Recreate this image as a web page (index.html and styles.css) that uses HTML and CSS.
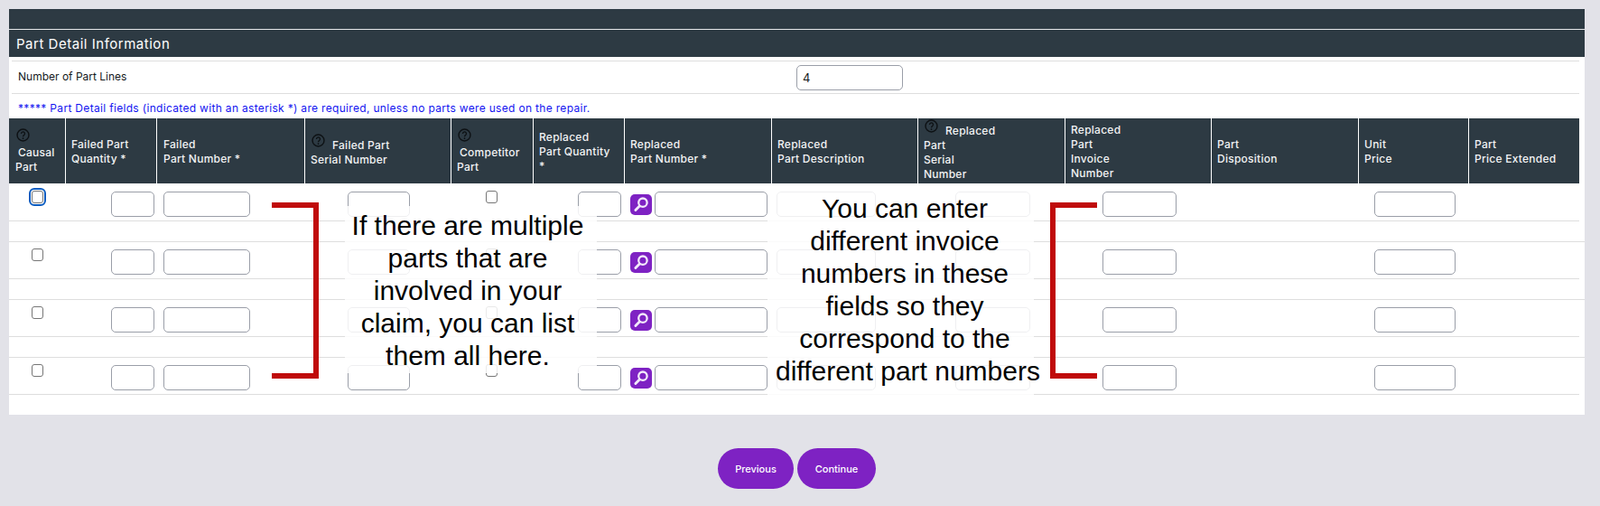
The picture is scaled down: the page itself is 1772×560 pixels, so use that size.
FILE: index.html
```html
<!DOCTYPE html>
<html lang="en">
<head>
<meta charset="utf-8">
<title>Part Detail Information</title>
<link rel="stylesheet" href="styles.css">
</head>
<body>
<svg class="defs" width="0" height="0" aria-hidden="true">
  <symbol id="help" viewBox="0 0 16 16">
    <circle cx="8" cy="8" r="6.9" fill="none" stroke="#0d1114" stroke-width="1.5"/>
    <path d="M5.9 6.3a2.1 2.1 0 1 1 3.3 1.7c-.8.6-1.2 1-1.2 1.9" fill="none" stroke="#0d1114" stroke-width="1.4"/>
    <circle cx="8" cy="11.9" r=".9" fill="#0d1114"/>
  </symbol>
  <symbol id="lens" viewBox="0 0 24 24">
    <circle cx="14" cy="9.6" r="4.9" fill="none" stroke="#f3e9fb" stroke-width="2.4"/>
    <path d="M10.2 13.6 5.6 18.2" fill="none" stroke="#f3e9fb" stroke-width="3" stroke-linecap="round"/>
  </symbol>
</svg>

<main class="page">
  <section class="panel">
    <div class="bar-top"></div>
    <h2 class="bar-title">Part Detail Information</h2>

    <div class="lines-row">
      <span class="lines-label">Number of Part Lines</span>
      <input class="field lines-input" type="text" value="4">
    </div>

    <p class="note">***** Part Detail fields (indicated with an asterisk *) are required, unless no parts were used on the repair.</p>

    <div class="grid head">
      <div class="th"><svg class="help"><use href="#help"/></svg><span class="indent">Causal</span><br>Part</div>
      <div class="th">Failed Part<br>Quantity *</div>
      <div class="th th-wide">Failed<br>Part Number *</div>
      <div class="th th-help"><svg class="help inline"><use href="#help"/></svg><span class="gap">Failed Part</span><br>Serial Number</div>
      <div class="th"><svg class="help"><use href="#help"/></svg><span class="indent">Competitor</span><br>Part</div>
      <div class="th">Replaced<br>Part Quantity<br>*</div>
      <div class="th">Replaced<br>Part Number *</div>
      <div class="th">Replaced<br>Part Description</div>
      <div class="th th-help"><svg class="help inline"><use href="#help"/></svg><span class="gap">Replaced</span><br>Part<br>Serial<br>Number</div>
      <div class="th">Replaced<br>Part<br>Invoice<br>Number</div>
      <div class="th">Part<br>Disposition</div>
      <div class="th">Unit<br>Price</div>
      <div class="th">Part<br>Price Extended</div>
    </div>

    <div class="grid part-row">
      <div class="c-causal"><input class="check is-focused" type="checkbox"></div>
      <div class="c-fqty"><input class="field w48" type="text"></div>
      <div class="c-fnum"><input class="field w96" type="text"></div>
      <div class="c-fser"><input class="field w69" type="text"></div>
      <div class="c-comp"><input class="check" type="checkbox"></div>
      <div class="c-rqty"><input class="field w48" type="text"></div>
      <div class="c-rnum"><span class="lookup"><svg class="lens"><use href="#lens"/></svg></span><input class="field w125" type="text"></div>
      <div class="c-rdesc"><input class="field w110" type="text"></div>
      <div class="c-rser"><input class="field w83" type="text"></div>
      <div class="c-rinv"><input class="field w82" type="text"></div>
      <div></div>
      <div class="c-unit"><input class="field w90" type="text"></div>
      <div></div>
    </div>
    <div class="spacer"></div>

    <div class="grid part-row">
      <div class="c-causal"><input class="check" type="checkbox"></div>
      <div class="c-fqty"><input class="field w48" type="text"></div>
      <div class="c-fnum"><input class="field w96" type="text"></div>
      <div class="c-fser"><input class="field w69" type="text"></div>
      <div class="c-comp"><input class="check" type="checkbox"></div>
      <div class="c-rqty"><input class="field w48" type="text"></div>
      <div class="c-rnum"><span class="lookup"><svg class="lens"><use href="#lens"/></svg></span><input class="field w125" type="text"></div>
      <div class="c-rdesc"><input class="field w110" type="text"></div>
      <div class="c-rser"><input class="field w83" type="text"></div>
      <div class="c-rinv"><input class="field w82" type="text"></div>
      <div></div>
      <div class="c-unit"><input class="field w90" type="text"></div>
      <div></div>
    </div>
    <div class="spacer"></div>

    <div class="grid part-row">
      <div class="c-causal"><input class="check" type="checkbox"></div>
      <div class="c-fqty"><input class="field w48" type="text"></div>
      <div class="c-fnum"><input class="field w96" type="text"></div>
      <div class="c-fser"><input class="field w69" type="text"></div>
      <div class="c-comp"><input class="check" type="checkbox"></div>
      <div class="c-rqty"><input class="field w48" type="text"></div>
      <div class="c-rnum"><span class="lookup"><svg class="lens"><use href="#lens"/></svg></span><input class="field w125" type="text"></div>
      <div class="c-rdesc"><input class="field w110" type="text"></div>
      <div class="c-rser"><input class="field w83" type="text"></div>
      <div class="c-rinv"><input class="field w82" type="text"></div>
      <div></div>
      <div class="c-unit"><input class="field w90" type="text"></div>
      <div></div>
    </div>
    <div class="spacer"></div>

    <div class="grid part-row">
      <div class="c-causal"><input class="check" type="checkbox"></div>
      <div class="c-fqty"><input class="field w48" type="text"></div>
      <div class="c-fnum"><input class="field w96" type="text"></div>
      <div class="c-fser"><input class="field w69" type="text"></div>
      <div class="c-comp"><input class="check" type="checkbox"></div>
      <div class="c-rqty"><input class="field w48" type="text"></div>
      <div class="c-rnum"><span class="lookup"><svg class="lens"><use href="#lens"/></svg></span><input class="field w125" type="text"></div>
      <div class="c-rdesc"><input class="field w110" type="text"></div>
      <div class="c-rser"><input class="field w83" type="text"></div>
      <div class="c-rinv"><input class="field w82" type="text"></div>
      <div></div>
      <div class="c-unit"><input class="field w90" type="text"></div>
      <div></div>
    </div>
  </section>

  <div class="actions">
    <button class="pill prev" type="button">Previous</button>
    <button class="pill next" type="button">Continue</button>
  </div>

  <div class="callout callout-left">If there are multiple<br>parts that are<br>involved in your<br>claim, you can list<br>them all here.</div>
  <div class="callout callout-right">You can enter<br>different invoice<br>numbers in these<br>fields so they<br>correspond to the<br>different part numbers</div>
  <div class="bracket bracket-close"></div>
  <div class="bracket bracket-open"></div>
</main>
</body>
</html>
```
FILE: styles.css
```css
* { box-sizing: border-box; }

html, body { margin: 0; padding: 0; }

body {
  background: #e2e2e8;
  font-family: Inter, "Liberation Sans", sans-serif;
  color: #15191c;
}

.defs { position: absolute; }

.page {
  position: relative;
  width: 1772px;
  height: 560px;
  padding: 10px 17px 0 10px;
  overflow: hidden;
}

.panel {
  background: #fff;
  height: 449px;
  overflow: hidden;
}

.bar-top {
  height: 23px;
  background: #2d3a43;
  border-bottom: 1px solid #e6e8ea;
}

.bar-title {
  margin: 0;
  height: 30px;
  padding: 1px 8px 0;
  background: #2d3a43;
  color: #fff;
  font-size: 15px;
  line-height: 30px;
  font-weight: 400;
  letter-spacing: .52px;
}

.lines-row {
  display: grid;
  grid-template-columns: 869px 1fr;
  align-items: center;
  width: 1736px;
  height: 37px;
  margin: 4px 0 0 3px;
  border-top: 1px solid #dedede;
  border-bottom: 1px solid #dedede;
}

.lines-label {
  padding: 0 0 3px 7px;
  font-size: 12px;
}

.note {
  margin: 0;
  height: 27px;
  padding-left: 10px;
  color: #1414f0;
  font-size: 12px;
  line-height: 32px;
  letter-spacing: .32px;
}

.grid {
  display: grid;
  grid-template-columns: 62px 101px 164px 162px 91px 101px 163px 162px 163px 162px 163px 122px 123px;
  width: 1739px;
}

.head {
  height: 72px;
  margin-bottom: 1px;
  background:
    linear-gradient(#fff, #fff) 62px 0 / 1px 100% no-repeat,
    linear-gradient(#fff, #fff) 163px 0 / 1px 100% no-repeat,
    linear-gradient(#fff, #fff) 327px 0 / 1px 100% no-repeat,
    linear-gradient(#fff, #fff) 489px 0 / 1px 100% no-repeat,
    linear-gradient(#fff, #fff) 580px 0 / 1px 100% no-repeat,
    linear-gradient(#fff, #fff) 681px 0 / 1px 100% no-repeat,
    linear-gradient(#fff, #fff) 844px 0 / 1px 100% no-repeat,
    linear-gradient(#fff, #fff) 1006px 0 / 1px 100% no-repeat,
    linear-gradient(#fff, #fff) 1169px 0 / 1px 100% no-repeat,
    linear-gradient(#fff, #fff) 1331px 0 / 1px 100% no-repeat,
    linear-gradient(#fff, #fff) 1494px 0 / 1px 100% no-repeat,
    linear-gradient(#fff, #fff) 1616px 0 / 1px 100% no-repeat,
    #2d3a43;
}

.th {
  align-self: center;
  padding: 1px 0 0 7px;
  color: #f2f3f4;
  font-size: 12px;
  line-height: 16px;
  font-weight: 500;
  letter-spacing: .25px;
  white-space: nowrap;
}

.th-wide { padding-left: 8px; }
.th-help { padding-bottom: 3px; }

.help {
  display: block;
  width: 15px;
  height: 15px;
  margin: -1px 0 4px 1px;
}

.help.inline {
  display: inline-block;
  margin: 0 0 5px 1px;
  vertical-align: -3px;
}

.indent { padding-left: 3px; }
.gap { padding-left: 8px; }

.part-row {
  height: 41px;
  padding-top: 8px;
  border-bottom: 1px solid #dedede;
}

.part-row > div {
  display: flex;
  align-items: flex-start;
}

.spacer {
  height: 23px;
  border-bottom: 1px solid #dedede;
}

.field {
  display: block;
  height: 28px;
  margin: 0;
  padding: 0 6px;
  background: #fff;
  border: 1px solid #9a9ea8;
  border-radius: 5px;
  font-family: Inter, "Liberation Sans", sans-serif;
  font-size: 13px;
  color: #15191c;
}

.lines-input { width: 118px; }

.w48 { width: 48px; }
.w69 { width: 69px; }
.w82 { width: 82px; }
.w83 { width: 83px; }
.w90 { width: 90px; }
.w96 { width: 96px; }
.w110 { width: 110px; }
.w125 { width: 125px; }

.check {
  appearance: none;
  display: block;
  width: 13px;
  height: 14px;
  margin: -1px 0 0;
  background: #fff;
  border: 1px solid #767676;
  border-radius: 3px;
}

.check.is-focused {
  outline: 2px solid #0c5cc0;
  outline-offset: 1px;
  border-radius: 3px;
}

.c-causal { padding-left: 25px; }
.c-fqty { padding-left: 51px; }
.c-fnum { padding-left: 8px; }
.c-fser { padding-left: 48px; }
.c-comp { padding-left: 39px; }
.c-rqty { padding-left: 50px; }
.c-rnum { padding-left: 7px; gap: 3px; }
.c-rdesc { padding-left: 6px; }
.c-rser { padding-left: 42px; }
.c-rinv { padding-left: 42px; }
.c-unit { padding-left: 18px; }

.lookup {
  display: block;
  flex: none;
  width: 24px;
  height: 23px;
  margin-top: 3px;
  background: #7e22c3;
  border-radius: 5px;
}

.lens {
  display: block;
  width: 24px;
  height: 23px;
}

.actions {
  display: flex;
  justify-content: center;
  gap: 4px;
  margin-top: 37px;
}

.pill {
  height: 45px;
  padding: 0;
  background: #7e22c3;
  border: 0;
  border-radius: 22.5px;
  color: #fff;
  font-family: Inter, "Liberation Sans", sans-serif;
  font-size: 11px;
  font-weight: 500;
}

.prev { width: 84px; }
.next { width: 87px; }

.callout {
  position: absolute;
  color: #000;
  font-family: "Liberation Sans", Arial, sans-serif;
  font-size: 30px;
  line-height: 36px;
  text-align: center;
  background: rgba(255, 255, 255, .84);
  white-space: nowrap;
}

.callout-left {
  left: 382px;
  top: 228px;
  width: 279px;
  height: 185px;
  padding: 4px 7px 0 0;
}

.callout-right {
  left: 850px;
  top: 203px;
  width: 295px;
  height: 256px;
  padding: 10px 0 0 9px;
}

.bracket {
  position: absolute;
  top: 224px;
  width: 52px;
  height: 195px;
  border: 6px solid #c00b0b;
}

.bracket-close {
  left: 301px;
  border-left: 0;
}

.bracket-open {
  left: 1163px;
  border-right: 0;
}
```
